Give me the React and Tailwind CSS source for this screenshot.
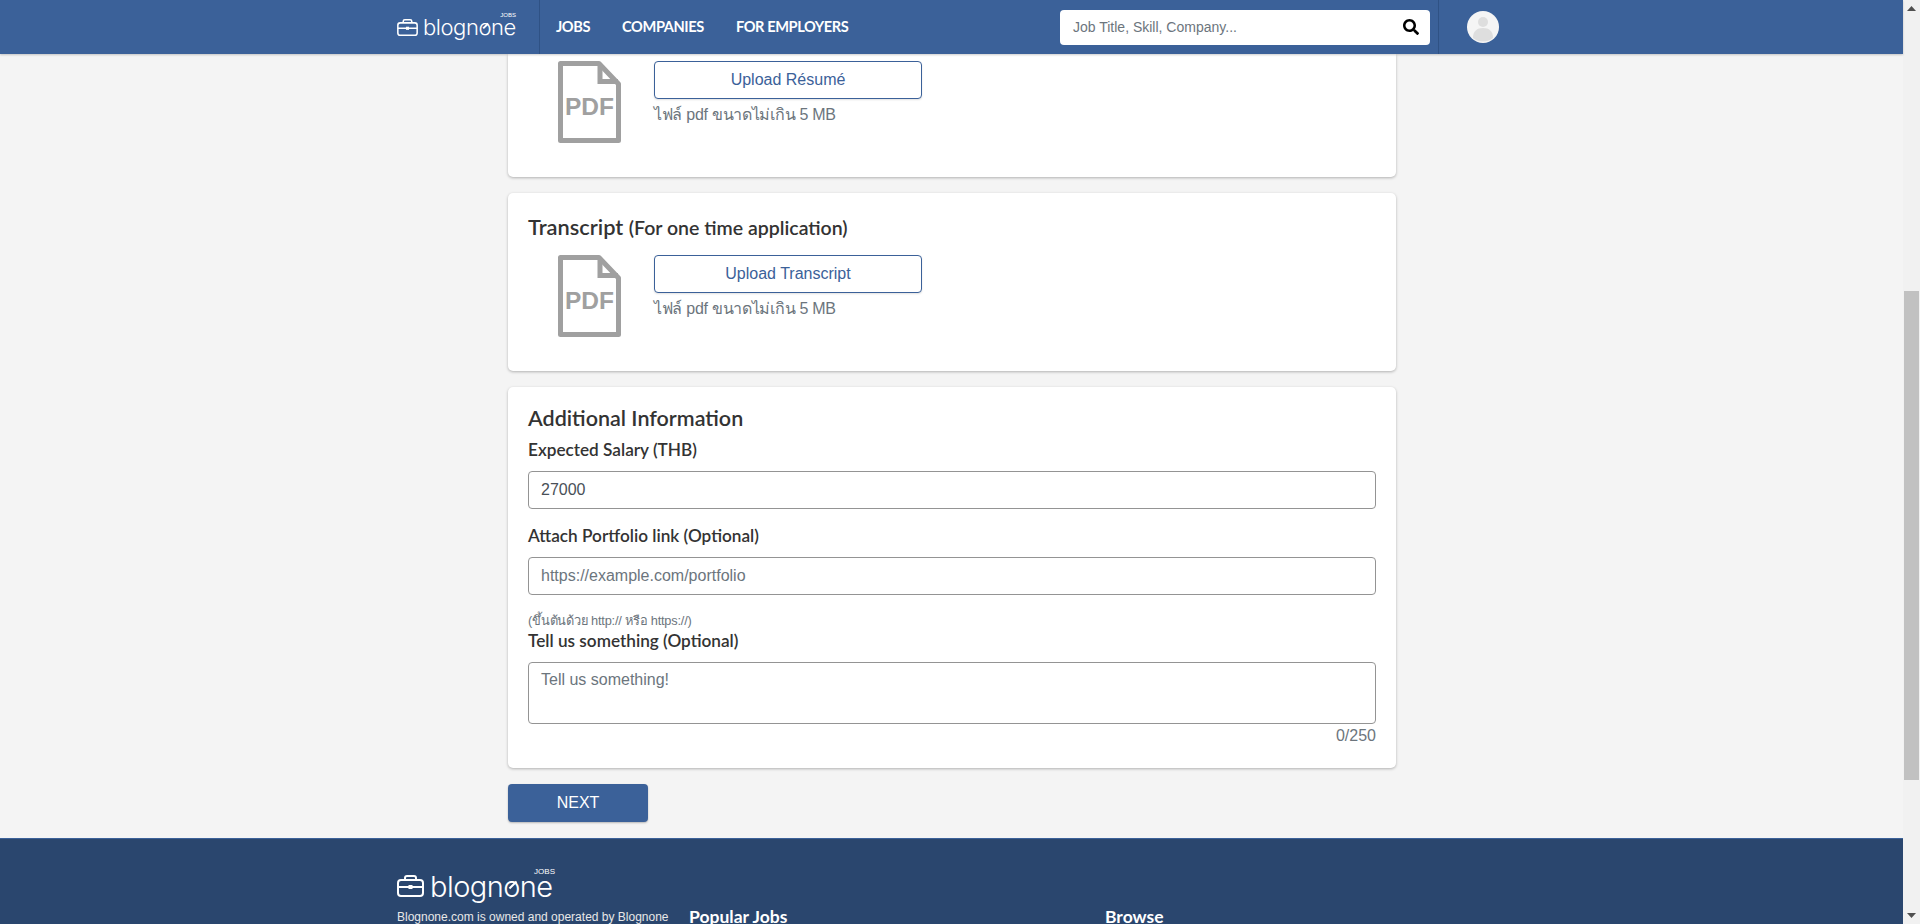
import React from "react";
import { FaSearch } from "react-icons/fa";

const heading = "font-['Lato','Noto_Sans',sans-serif]";

function Logo({ big }) {
  return (
    <div className={big ? "relative flex items-center h-[34px] w-[158px]" : "relative flex items-center h-[26px] w-[119px]"}>
      <svg viewBox="0 0 27 22" className={big ? "w-[27px] h-[22px] shrink-0" : "w-[21px] h-[17px] shrink-0"} fill="none" stroke="#fff" strokeWidth="2">
        <rect x="1" y="5" width="25" height="16" rx="3" />
        <path d="M8 5V3a2 2 0 0 1 2-2h7a2 2 0 0 1 2 2v2M1 12h25" />
        <rect x="11.5" y="10" width="4" height="4" fill="#fff" stroke="none" />
      </svg>
      <span className={big ? "ml-[6px] text-[29px] leading-none font-['Inter',sans-serif] font-light text-white tracking-[-0.55px]" : "ml-[5px] text-[22px] leading-none font-['Inter',sans-serif] font-light text-white tracking-[-0.45px]"}>
        blogn
        <span className="relative">
          o
          <span className={big ? "absolute left-[5px] top-[15px] w-[10px] h-[2px] bg-white -rotate-45" : "absolute left-[4px] top-[11px] w-[7px] h-[1.5px] bg-white -rotate-45"} />
        </span>
        ne
      </span>
      <span className={big ? "absolute right-0 top-[-1px] text-[8px] leading-none text-white font-['Liberation_Sans',sans-serif]" : "absolute right-0 top-[-2px] text-[6px] leading-none text-white font-['Liberation_Sans',sans-serif]"}>
        JOBS
      </span>
    </div>
  );
}

function PdfIcon() {
  return (
    <svg viewBox="0 0 63 82" className="w-[63px] h-[82px] shrink-0" fill="none">
      <path d="M2.5 2.5H41L60.5 23V79.5H2.5Z" stroke="#a0a0a0" strokeWidth="5" strokeLinejoin="round" />
      <path d="M42 3V20.5H60" stroke="#a0a0a0" strokeWidth="5" />
      <text x="31.5" y="54" textAnchor="middle" fontFamily="Liberation Sans, sans-serif" fontWeight="700" fontSize="24.5" fill="#a0a0a0">PDF</text>
    </svg>
  );
}

function Upload({ label }) {
  return (
    <div className="flex pl-[30px]">
      <PdfIcon />
      <div className="ml-[33px] w-[268px]">
        <button className="w-full h-[38px] bg-white border border-[#3b6199] rounded-[4px] text-[16px] text-[#3b6199] shadow-[0_1px_2px_rgba(0,0,0,0.12)]">
          {label}
        </button>
        <p className="mt-[4px] text-[16px] leading-[24px] text-[#6c757d] tracking-[-0.28px]">ไฟล์ pdf ขนาดไม่เกิน 5 MB</p>
      </div>
    </div>
  );
}

function Card({ className, children }) {
  return (
    <section className={"bg-white rounded-[5px] shadow-[0_1px_3px_rgba(0,0,0,0.28)] px-5 " + className}>{children}</section>
  );
}

function Label({ children, className = "" }) {
  return <label className={`block text-[17.2px] leading-[24px] font-semibold text-[#333] ${heading} ${className}`}>{children}</label>;
}

export default function App() {
  return (
    <div className="flex h-[924px] overflow-hidden bg-[#f4f4f4] font-['Liberation_Sans','Noto_Sans',sans-serif]">
      <div className="flex-1 min-w-0 flex flex-col">
        <header className="h-[54px] shrink-0 bg-[#3b6199] flex shadow-[0_1px_2px_rgba(0,0,0,0.2)] z-10">
          <div className="w-[397px] shrink-0" />
          <div className="w-[143px] shrink-0 border-r border-[#2f5285] flex items-center">
            <Logo />
          </div>
          <nav className={`flex items-center pl-4 gap-[32px] text-[14.6px] font-bold text-white tracking-[-0.4px] ${heading}`}>
            <a>JOBS</a>
            <a>COMPANIES</a>
            <a>FOR EMPLOYERS</a>
          </nav>
          <div className="flex-1" />
          <div className="flex items-center w-[370px] h-[35px] self-center bg-white rounded-[4px] pl-[13px] pr-[11px] shrink-0">
            <span className="flex-1 text-[14px] text-[#6c757d]">Job Title, Skill, Company...</span>
            <FaSearch className="w-4 h-4 text-black" />
          </div>
          <div className="ml-2 w-[465px] shrink-0 border-l border-[#2f5285] flex items-center pl-[28px]">
            <svg viewBox="0 0 32 32" className="w-8 h-8">
              <circle cx="16" cy="16" r="16" fill="#f5f5f5" />
              <circle cx="16" cy="11" r="5" fill="#dedede" />
              <path d="M6 27c0-7 4-10 10-10s10 3 10 10a16 16 0 0 1-20 0Z" fill="#dedede" />
            </svg>
          </div>
        </header>

        <main className="flex-1 overflow-hidden">
          <div className="w-[888px] ml-[508px]">
            <Card className="pt-[7px] h-[123px] rounded-t-none">
              <Upload label="Upload Résumé" />
            </Card>
            <Card className="mt-4 h-[178px] pt-[22px]">
              <h2 className={`text-[21.8px] leading-[24px] font-semibold text-[#333] ${heading}`}>
                Transcript <span className="text-[19.5px]">(For one time application)</span>
              </h2>
              <div className="mt-[15px]">
                <Upload label="Upload Transcript" />
              </div>
            </Card>
            <Card className="mt-4 h-[381px] pt-[19px]">
              <h2 className={`text-[21.5px] leading-[24px] font-semibold text-[#333] ${heading}`}>Additional Information</h2>
              <Label className="mt-[8px]">Expected Salary (THB)</Label>
              <div className="mt-[9px] h-[38px] border border-[#949494] rounded-[4px] px-3 flex items-center text-[16px] text-[#495057]">27000</div>
              <Label className="mt-[15px]">Attach Portfolio link (Optional)</Label>
              <div className="mt-[9px] h-[38px] border border-[#949494] rounded-[4px] px-3 flex items-center text-[16px] text-[#6c757d]">https://example.com/portfolio</div>
              <p className="mt-[18px] text-[12.8px] leading-[16px] text-[#6c757d] tracking-[-0.2px]">(ขึ้นต้นด้วย http:// หรือ https://)</p>
              <Label>Tell us something (Optional)</Label>
              <div className="mt-[9px] h-[62px] border border-[#949494] rounded-[4px] px-3 pt-[5px] text-[16px] leading-[24px] text-[#6c757d]">Tell us something!</div>
              <p className="text-right text-[16px] leading-[24px] text-[#6c757d]">0/250</p>
            </Card>
            <button className="mt-4 block w-[140px] h-[38px] bg-[#3b6199] rounded-[4px] text-white text-[16px] shadow-[0_1px_2px_rgba(0,0,0,0.25)]">NEXT</button>
          </div>
          <footer className="mt-4 h-[200px] bg-[#2a466e] border-t border-[#3b6199] pl-[397px] pt-[30px]">
            <Logo big />
            <div className="flex mt-[5px] items-center">
              <p className="w-[292px] shrink-0 text-[12px] leading-[18px] text-[#e8e8e8]">Blognone.com is owned and operated by Blognone</p>
              <h3 className={`w-[416px] shrink-0 text-[17.5px] leading-[18px] font-bold text-white ${heading}`}>Popular Jobs</h3>
              <h3 className={`text-[17.5px] leading-[18px] font-bold text-white ${heading}`}>Browse</h3>
            </div>
          </footer>
        </main>
      </div>

      <aside className="w-[17px] shrink-0 bg-[#f1f1f1] flex flex-col items-center">
        <svg viewBox="0 0 9 5" className="w-[9px] h-[5px] mt-[6px] mb-[6px] shrink-0"><path d="M4.5 0 9 5H0Z" fill="#505050" /></svg>
        <div className="w-[15px] h-[489px] mt-[274px] bg-[#c1c1c1]" />
        <div className="flex-1" />
        <svg viewBox="0 0 9 5" className="w-[9px] h-[5px] mb-[6px] shrink-0"><path d="M0 0H9L4.5 5Z" fill="#505050" /></svg>
      </aside>
    </div>
  );
}
